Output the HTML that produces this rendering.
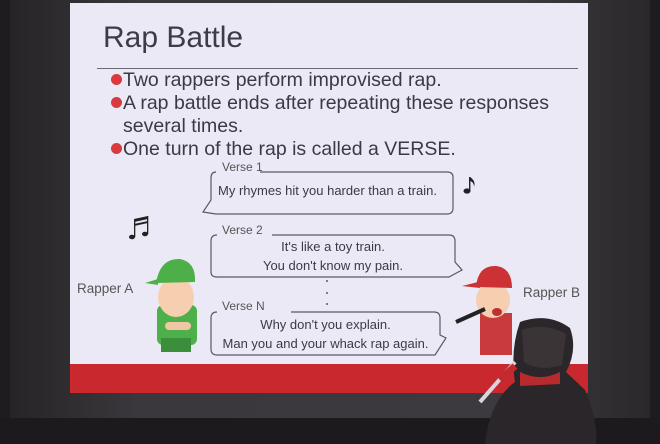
<!DOCTYPE html>
<html><head><meta charset="utf-8"><style>
html,body{margin:0;padding:0}
body{width:660px;height:444px;overflow:hidden;position:relative;background:#1e1c1e;font-family:"Liberation Sans",sans-serif}
.a{position:absolute}
.t{color:#3a3a44;white-space:nowrap}
.b{display:inline-block;width:11px;height:11px;border-radius:50%;background:#d83a3e;margin-right:1px;vertical-align:1px}
</style></head><body>
<div class="a" style="left:10px;top:0;width:640px;height:418px;background:linear-gradient(90deg,#262426,#3a383c 20%,#3c3a3e 80%,#2a282a)"></div>
<div class="a" style="left:0;top:418px;width:660px;height:26px;background:#1c1a1c"></div>
<div class="a" style="left:70px;top:3px;width:518px;height:361px;background:#ebe9f6"></div>
<div class="a" style="left:70px;top:364px;width:518px;height:29px;background:#c8282e"></div>
<div class="a t" style="left:103px;top:21px;font-size:30px;color:#3c3c46">Rap Battle</div>
<div class="a" style="left:97px;top:68px;width:481px;height:1px;background:#6a6a72"></div>
<div class="a t" style="left:111px;top:69px;font-size:19.5px;line-height:23px">
<div><span class="b"></span>Two rappers perform improvised rap.</div>
<div><span class="b"></span>A rap battle ends after repeating these responses</div>
<div style="padding-left:12px">several times.</div>
<div><span class="b"></span>One turn of the rap is called a VERSE.</div>
</div>
<svg class="a" style="left:0;top:0" width="660" height="444">
<g fill="none" stroke="#5a5a66" stroke-width="1.2">
<path d="M216 172 Q211 172 211 178 L211 200 L203 212 L216 214 L447 214 Q453 214 453 208 L453 177 Q453 172 447 172 L260 172"/>
<path d="M217 235 Q211 235 211 241 L211 272 Q211 277 217 277 L449 277 L462 270 L455 262 L455 241 Q455 235 449 235 L272 235"/>
<path d="M217 312 Q211 312 211 318 L211 349 Q211 355 217 355 L435 355 L446 338 L440 335 L440 318 Q440 312 434 312 L291 312"/>
</g>
<g fill="#5a5a66"><circle cx="327" cy="281" r="1"/><circle cx="327" cy="293" r="1"/><circle cx="327" cy="304" r="1"/></g>
<g fill="#222"><ellipse cx="467" cy="191" rx="3.5" ry="2.6"/><rect x="469" y="177" width="1.4" height="14"/><path d="M470 177 q6 4 4 10 q0-5-4-6z"/>
<ellipse cx="132" cy="237" rx="3" ry="2.3"/><ellipse cx="145" cy="234" rx="3" ry="2.3"/><rect x="134" y="219" width="1.3" height="18"/><rect x="147" y="216" width="1.3" height="18"/><path d="M134 219 L148 216 L148 219 L134 222z M134 224 L148 221 L148 223 L134 226z"/></g>
<rect x="157" y="305" width="40" height="40" rx="6" fill="#4db04a"/>
<rect x="161" y="338" width="30" height="14" fill="#3b8f3c"/>
<ellipse cx="176" cy="297" rx="18" ry="20" fill="#f6cfb0"/>
<path d="M156 283 Q160 258 180 259 Q196 262 195 282 Z" fill="#4caf48"/>
<path d="M158 279 L145 283 L158 285z" fill="#4caf48"/>
<rect x="165" y="322" width="26" height="8" rx="4" fill="#f0c6a4"/>
<rect x="480" y="313" width="32" height="42" fill="#c93a3c"/>
<ellipse cx="493" cy="300" rx="17" ry="18" fill="#f6cfb0"/>
<path d="M476 287 Q478 265 496 266 Q512 268 512 288 Z" fill="#cc3136"/>
<path d="M478 282 L462 286 L480 288z" fill="#cc3136"/>
<ellipse cx="497" cy="312" rx="5" ry="4" fill="#c03030"/>
<path d="M456 322 L485 309" stroke="#222" stroke-width="4"/>
<path d="M520 322 Q548 312 570 328 Q578 350 566 372 L585 390 Q598 420 596 444 L485 444 Q490 400 515 382 Q510 350 520 322z" fill="#2a2629"/>
<path d="M522 330 Q545 322 566 334 L562 365 Q540 372 524 362z" fill="#3a3436"/>
<path d="M520 372 Q540 382 560 372 L560 384 L520 386z" fill="#b72a2e"/>
<path d="M480 402 L515 362" stroke="#d8d6dc" stroke-width="4"/>
<path d="M500 380 L515 366" stroke="#c22a30" stroke-width="7"/>
</svg>
<div class="a t" style="left:222px;top:160px;font-size:12px;color:#555">Verse 1</div>
<div class="a t" style="left:218px;top:183px;font-size:13px">My rhymes hit you harder than a train.</div>
<div class="a t" style="left:222px;top:223px;font-size:12px;color:#555">Verse 2</div>
<div class="a t" style="left:211px;width:244px;top:237px;font-size:13px;line-height:19px;text-align:center">It's like a toy train.<br>You don't know my pain.</div>
<div class="a t" style="left:222px;top:299px;font-size:12px;color:#555">Verse N</div>
<div class="a t" style="left:211px;width:229px;top:315px;font-size:13px;line-height:19px;text-align:center">Why don't you explain.<br>Man you and your whack rap again.</div>
<div class="a t" style="left:77px;top:281px;font-size:13.5px;color:#555">Rapper A</div>
<div class="a t" style="left:523px;top:285px;font-size:13.5px;color:#555">Rapper B</div>
</body></html>
